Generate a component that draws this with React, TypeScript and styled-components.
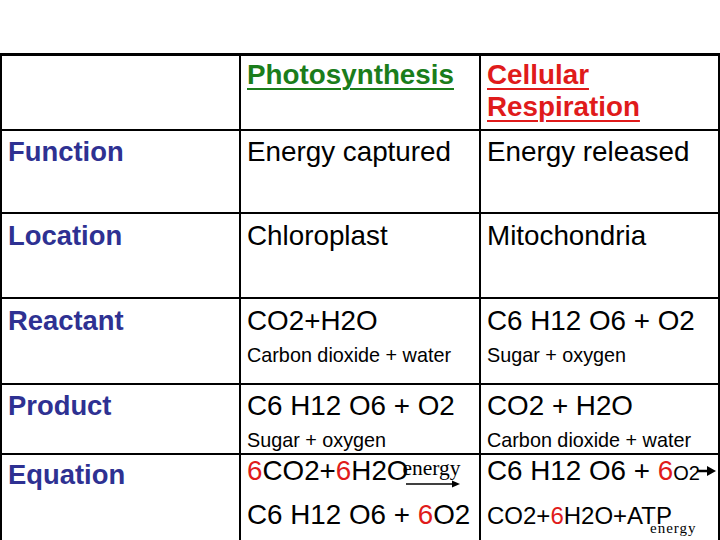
import React from "react";
import styled, { createGlobalStyle } from "styled-components";

const Global = createGlobalStyle`
  html, body { margin: 0; padding: 0; background: #fff; overflow: hidden; }
  body { font-family: "Liberation Sans", Arial, sans-serif; }
`;

const Page = styled.div`
  width: 720px;
  height: 540px;
  padding-top: 53px;
  box-sizing: border-box;
  overflow: hidden;
`;

const Table = styled.div`
  display: grid;
  grid-template-columns: 239px 240px 239px;
  grid-template-rows: 75px 83px 85px 86px 70px 92px;
  border-top: 3px solid #000;
  border-left: 2px solid #000;
`;

const Cell = styled.div<{ $pt?: number }>`
  box-sizing: border-box;
  border-right: 2px solid #000;
  border-bottom: 2px solid #000;
  padding: ${(p) => p.$pt ?? 5}px 6px 0 6px;
  font-size: 27.8px;
  line-height: 32px;
  color: #000;
  white-space: nowrap;
  overflow: hidden;
`;

const HeadText = styled.div<{ $color: string }>`
  font-weight: bold;
  font-size: 27.8px;
  line-height: 32px;
  color: ${(p) => p.$color};
  text-decoration: underline;
  text-decoration-thickness: 2px;
  text-underline-offset: 4px;
  white-space: normal;
`;

const Label = styled.div<{ $mt?: number }>`
  font-weight: bold;
  color: #2e3192;
  font-size: 27.4px;
  margin-top: ${(p) => p.$mt ?? 0}px;
`;

const Main = styled.div``;

const Sub = styled.div`
  font-size: 19.8px;
  line-height: 24px;
  margin-top: 6px;
`;

const EqLine = styled.div<{ $mt?: number; $size?: number }>`
  font-size: ${(p) => p.$size ?? 27.8}px;
  line-height: 32px;
  margin-top: ${(p) => p.$mt ?? 0}px;
  white-space: nowrap;
`;

const Red = styled.span`
  color: #e01b1b;
`;

const Small = styled.span`
  font-size: 20px;
`;

const EnergyArrow = styled.span`
  display: inline-flex;
  flex-direction: column;
  align-items: flex-start;
  margin-left: -6px;
  vertical-align: 5px;
`;

const SerifWord = styled.span<{ $size: number; $ls?: number }>`
  font-family: "Liberation Serif", "Times New Roman", serif;
  font-size: ${(p) => p.$size}px;
  line-height: ${(p) => p.$size}px;
  letter-spacing: ${(p) => p.$ls ?? 0}px;
`;

const LowWord = styled.span`
  display: inline-block;
  margin-left: -22px;
  vertical-align: -9px;
`;

const Arrow = ({ w }: { w: number }) => (
  <svg width={w} height="8" viewBox={`0 0 ${w} 8`} style={{ display: "block", marginLeft: 4 }}>
    <line x1="0" y1="4" x2={w - 6} y2="4" stroke="#000" strokeWidth="1.6" />
    <polygon points={`${w - 8},0.5 ${w},4 ${w - 8},7.5`} fill="#000" />
  </svg>
);

const EndArrow = styled.svg`
  vertical-align: 4px;
  margin-left: -3px;
`;

export default function App() {
  return (
    <Page>
      <Global />
      <Table>
        <Cell $pt={3} />
        <Cell $pt={3}>
          <HeadText $color="#1b7d1b">Photosynthesis</HeadText>
        </Cell>
        <Cell $pt={3}>
          <HeadText $color="#e01b1b">
            Cellular
            <br />
            Respiration
          </HeadText>
        </Cell>

        <Cell>
          <Label>Function</Label>
        </Cell>
        <Cell>
          <Main>Energy captured</Main>
        </Cell>
        <Cell>
          <Main>Energy released</Main>
        </Cell>

        <Cell $pt={6}>
          <Label>Location</Label>
        </Cell>
        <Cell $pt={6}>
          <Main>Chloroplast</Main>
        </Cell>
        <Cell $pt={6}>
          <Main>Mitochondria</Main>
        </Cell>

        <Cell $pt={6}>
          <Label>Reactant</Label>
        </Cell>
        <Cell $pt={6}>
          <Main>CO2+H2O</Main>
          <Sub>Carbon dioxide + water</Sub>
        </Cell>
        <Cell $pt={6}>
          <Main>C6 H12 O6 + O2</Main>
          <Sub>Sugar + oxygen</Sub>
        </Cell>

        <Cell>
          <Label>Product</Label>
        </Cell>
        <Cell>
          <Main>C6 H12 O6 + O2</Main>
          <Sub>Sugar + oxygen</Sub>
        </Cell>
        <Cell>
          <Main>CO2 + H2O</Main>
          <Sub>Carbon dioxide + water</Sub>
        </Cell>

        <Cell $pt={0}>
          <Label $mt={4}>Equation</Label>
        </Cell>
        <Cell $pt={0}>
          <EqLine>
            <Red>6</Red>CO2+<Red>6</Red>H2O
            <EnergyArrow>
              <SerifWord $size={21.5}>energy</SerifWord>
              <Arrow w={54} />
            </EnergyArrow>
          </EqLine>
          <EqLine $mt={11}>
            C6 H12 O6 + <Red>6</Red>O2
          </EqLine>
        </Cell>
        <Cell $pt={0}>
          <EqLine>
            C6 H12 O6 + <Red>6</Red>
            <Small>O2</Small>
            <EndArrow width="20" height="10" viewBox="0 0 20 10">
              <line x1="0" y1="5" x2="12" y2="5" stroke="#000" strokeWidth="2.5" />
              <polygon points="10,0 19,5 10,10" fill="#000" />
            </EndArrow>
          </EqLine>
          <EqLine $mt={11} $size={24}>
            CO2+<Red>6</Red>H2O+ATP
            <LowWord>
              <SerifWord $size={15} $ls={1}>
                energy
              </SerifWord>
            </LowWord>
          </EqLine>
        </Cell>
      </Table>
    </Page>
  );
}
